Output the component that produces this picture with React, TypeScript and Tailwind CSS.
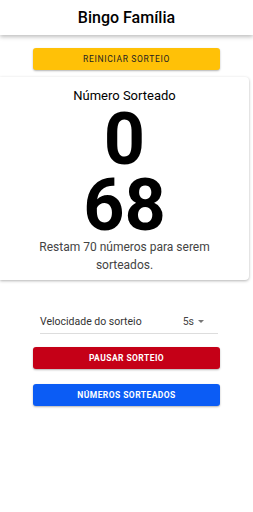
export default function App() {
  return (
    <div className="w-[253px] h-[512px] bg-white overflow-hidden font-['Roboto',sans-serif] text-black">
      <header className="h-[35px] flex items-center justify-center bg-white shadow-[0_2px_4px_rgba(0,0,0,0.25)] relative z-10">
        <h1 className="text-[16px] font-medium leading-none">Bingo Família</h1>
      </header>

      <div className="flex flex-col items-center pt-[13px]">
        <button className="w-[187px] h-[22px] bg-[#FFC107] rounded-[3px] shadow-[0_1px_2px_rgba(0,0,0,0.3)] text-[8.5px] tracking-[0.08em] text-[#222] leading-none">
          REINICIAR SORTEIO
        </button>
      </div>

      <div className="mt-[7px] mr-[4px] h-[203px] bg-white rounded-r-[4px] shadow-[0_1px_3px_rgba(0,0,0,0.3)] flex flex-col items-center pt-[11px]">
        <div className="text-[13px] leading-[16px]">Número Sorteado</div>
        <div className="text-[72px] font-bold leading-[64px] mt-[4px]">0</div>
        <div className="text-[72px] font-bold leading-[64px] mt-[2px]">68</div>
        <div className="text-[12px] leading-[18px] text-[#444] text-center px-[34px] mt-[0px]">
          Restam 70 números para serem sorteados.
        </div>
      </div>

      <div className="ml-[40px] mr-[35px] mt-[30px] h-[24px] border-b border-[#ddd] flex items-center justify-between text-[10.5px] text-[#333]">
        <span>Velocidade do sorteio</span>
        <span className="flex items-center gap-[4px] text-[#444] pr-[14px]">
          5s
          <svg width="6" height="3" viewBox="0 0 6 3"><path d="M0 0h6L3 3z" fill="#777" /></svg>
        </span>
      </div>

      <div className="flex flex-col items-center gap-[15px] mt-[13px]">
        <button className="w-[187px] h-[22px] bg-[#C50017] rounded-[3px] shadow-[0_1px_2px_rgba(0,0,0,0.3)] text-[8.5px] font-bold tracking-[0.05em] text-white leading-none">
          PAUSAR SORTEIO
        </button>
        <button className="w-[187px] h-[22px] bg-[#0B5CF5] rounded-[3px] shadow-[0_1px_2px_rgba(0,0,0,0.3)] text-[8.5px] font-bold tracking-[0.05em] text-white leading-none">
          NÚMEROS SORTEADOS
        </button>
      </div>
    </div>
  );
}
